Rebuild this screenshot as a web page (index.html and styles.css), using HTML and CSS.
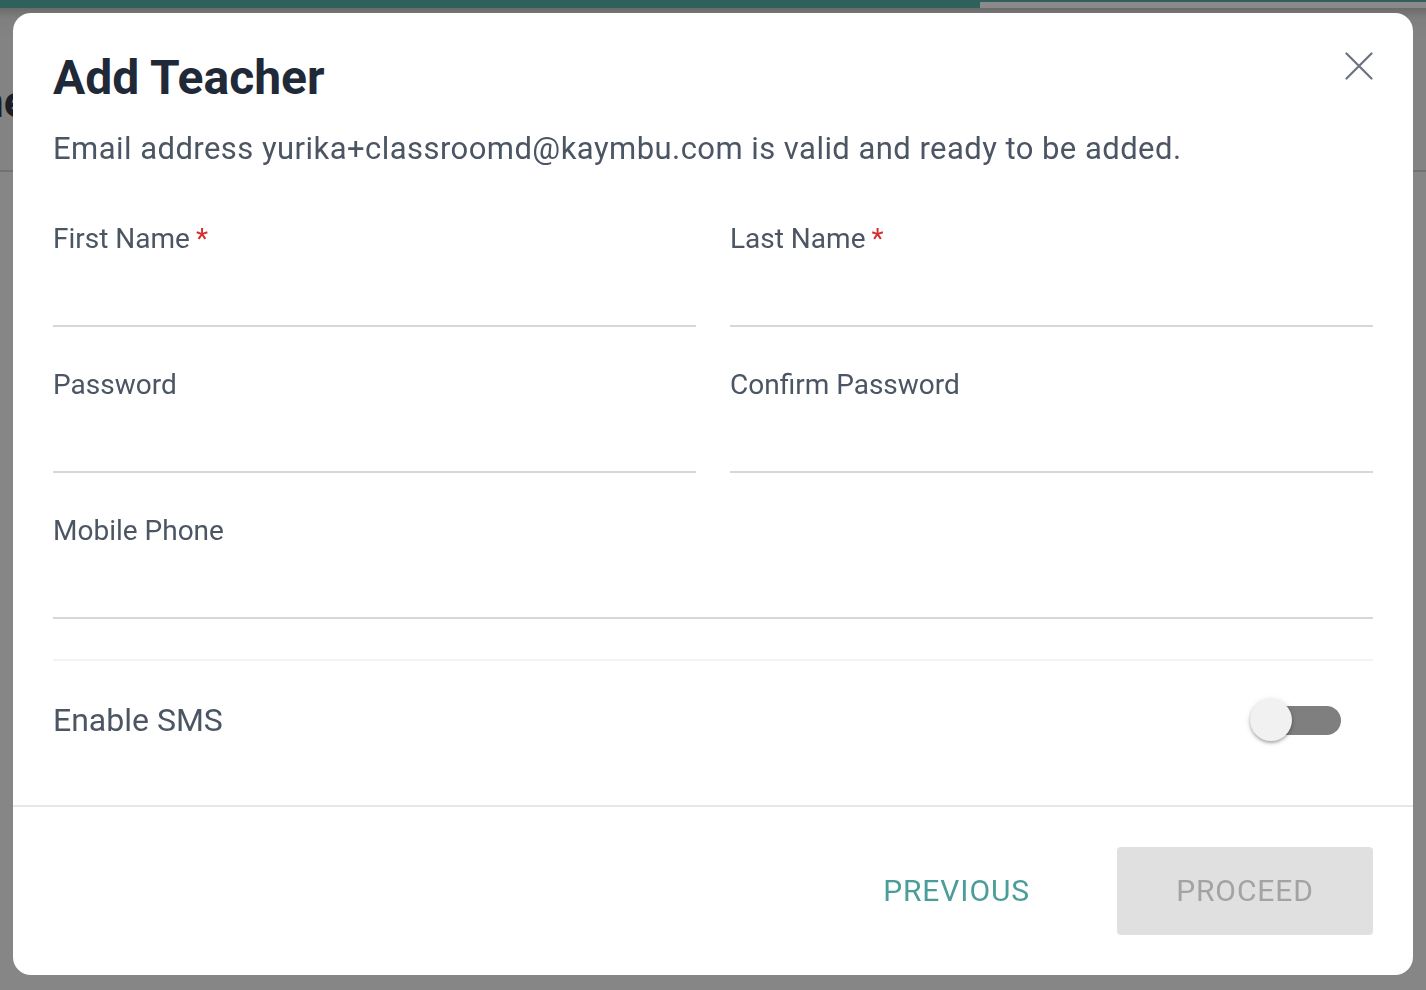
FILE: index.html
```html
<!DOCTYPE html>
<html lang="en">
<head>
<meta charset="utf-8">
<title>Add Teacher</title>
<link rel="stylesheet" href="styles.css">
</head>
<body>
<div class="page">
  <div class="progress"><div class="progress-fill"></div><div class="progress-rest"></div></div>
  <header class="page-header">
    <h1 class="page-title">ne</h1>
  </header>
  <main class="page-main"></main>
</div>

<div class="modal" role="dialog" aria-labelledby="dlg-title">
  <div class="modal-body">
    <div class="modal-head">
      <h2 class="modal-title" id="dlg-title">Add Teacher</h2>
      <button class="close-btn" aria-label="Close">
        <svg width="28" height="28" viewBox="0 0 28 28" fill="none" stroke="#6b7280" stroke-width="2.2" stroke-linecap="round"><path d="M1.5 1.5 L26.5 26.5 M26.5 1.5 L1.5 26.5"/></svg>
      </button>
    </div>
    <p class="modal-sub">Email address yurika+classroomd@kaymbu.com is valid and ready to be added.</p>

    <div class="form-grid">
      <label class="field">
        <span class="field-label">First Name <span class="req">*</span></span>
        <span class="field-input"></span>
      </label>
      <label class="field">
        <span class="field-label">Last Name <span class="req">*</span></span>
        <span class="field-input"></span>
      </label>
      <label class="field">
        <span class="field-label">Password</span>
        <span class="field-input"></span>
      </label>
      <label class="field">
        <span class="field-label">Confirm Password</span>
        <span class="field-input"></span>
      </label>
      <label class="field field-wide">
        <span class="field-label">Mobile Phone</span>
        <span class="field-input"></span>
      </label>
    </div>

    <div class="sms-row">
      <span class="sms-label">Enable SMS</span>
      <span class="switch"><span class="switch-track"></span><span class="switch-thumb"></span></span>
    </div>
  </div>
  <footer class="modal-foot">
    <button class="btn btn-text">PREVIOUS</button>
    <button class="btn btn-disabled">PROCEED</button>
  </footer>
</div>
</body>
</html>
```

FILE: styles.css
```css
* { box-sizing: border-box; }
html, body { margin: 0; padding: 0; }
body {
  width: 1426px;
  height: 990px;
  overflow: hidden;
  background: #868686;
  font-family: Roboto, "Liberation Sans", Arial, sans-serif;
}
.page { display: flex; flex-direction: column; height: 990px; }
.progress { display: flex; height: 8px; background: #2f605c; }
.progress-fill { width: 980px; background: #2f605c; }
.progress-rest { flex: 1; margin-top: 2px; background: #8a8a8a; }
.page-header {
  height: 164px;
  background: linear-gradient(#6b6b6b 0, #7e7e7e 10px, #838383 30px);
  border-bottom: 2px solid #727272;
  display: flex;
  align-items: flex-start;
}
.page-title {
  margin: 66px 0 0 -21px;
  font-size: 44px;
  font-weight: 700;
  line-height: 56px;
  color: #1b1e24;
}
.page-main { flex: 1; }

.modal {
  position: fixed;
  top: 13px;
  left: 13px;
  width: 1400px;
  height: 962px;
  background: #fff;
  border-radius: 18px;
  display: flex;
  flex-direction: column;
}
.modal-body { padding: 37px 40px 0; flex: 1; }
.modal-head { display: flex; justify-content: space-between; align-items: flex-start; }
.modal-title {
  margin: 0;
  font-size: 48px;
  line-height: 56px;
  font-weight: 700;
  color: #1f2937;
}
.close-btn {
  margin: 2px 0 0;
  padding: 0;
  border: 0;
  background: none;
  width: 28px;
  height: 28px;
  margin-right: 0;
}
.close-btn svg { display: block; }
.modal-sub {
  margin: 25px 0 0;
  font-size: 31px;
  letter-spacing: 0.45px;
  line-height: 36px;
  color: #4b5563;
}
.form-grid {
  display: grid;
  grid-template-columns: 1fr 1fr;
  column-gap: 34px;
  row-gap: 42px;
  margin-top: 56px;
}
.field { display: flex; flex-direction: column; }
.field-wide { grid-column: 1 / -1; }
.field-label {
  font-size: 28px;
  line-height: 32px;
  color: #4b5563;
}
.req { color: #d32f2f; margin-left: -1px; }
.field-input {
  height: 72px;
  border-bottom: 2px solid #d4d7dc;
}
.sms-row {
  margin-top: 40px;
  border-top: 2px solid #f2f3f5;
  padding: 38px 32px 0 0;
  height: 145px;
  display: flex;
  justify-content: space-between;
  align-items: flex-start;
}
.sms-label {
  font-size: 32px;
  line-height: 42px;
  color: #4b5563;
}
.switch { position: relative; width: 91px; height: 42px; }
.switch-track {
  position: absolute;
  left: 6px;
  right: 0;
  top: 7px;
  height: 29px;
  border-radius: 15px;
  background: #7f7f7f;
}
.switch-thumb {
  position: absolute;
  left: 0;
  top: 0;
  width: 42px;
  height: 42px;
  border-radius: 50%;
  background: #f1f1f1;
  box-shadow: 0 2px 3px rgba(0,0,0,0.25), 0 1px 6px rgba(0,0,0,0.15);
}
.modal-foot {
  border-top: 2px solid #e6e7ea;
  padding: 40px 40px 40px;
  display: flex;
  justify-content: flex-end;
  gap: 28px;
}
.btn {
  height: 88px;
  padding: 0 59px;
  border: 0;
  border-radius: 4px;
  font-family: Roboto, "Liberation Sans", Arial, sans-serif;
  font-size: 30px;
  letter-spacing: 0.9px;
  font-weight: 400;
  background: none;
  line-height: 86px;
}
.btn-text { color: #4a9d98; }
.btn-disabled { background: #e0e0e0; color: #a3a3a3; min-width: 256px; }
```
